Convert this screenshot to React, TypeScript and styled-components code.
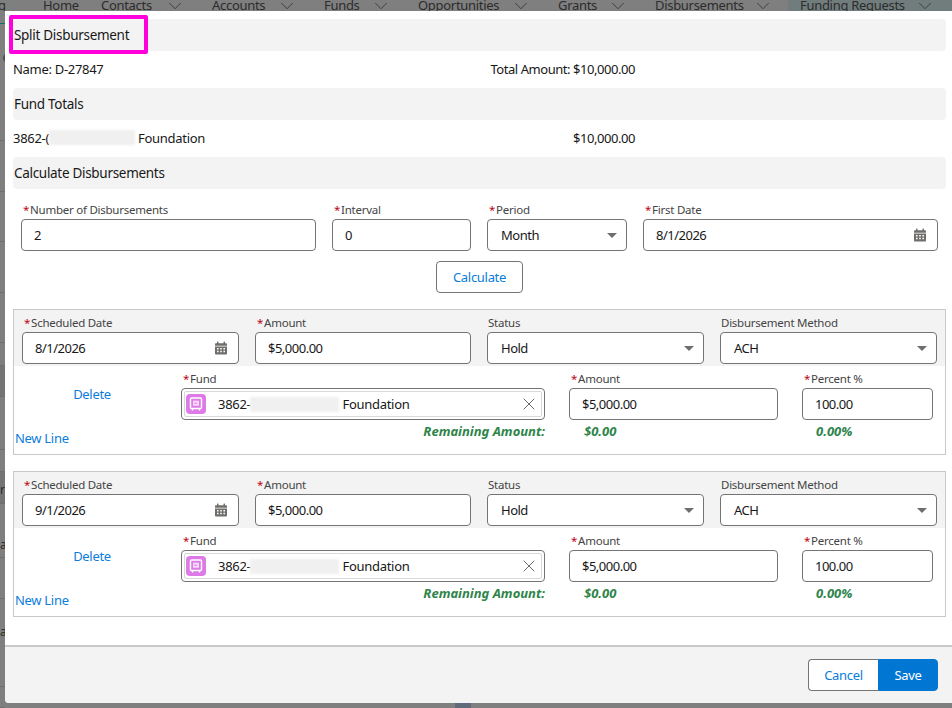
import React from 'react';
import styled, { createGlobalStyle } from 'styled-components';
import { ChevronDown, X } from 'lucide-react';

const GlobalStyle = createGlobalStyle`
  html, body {
    margin: 0;
    padding: 0;
    width: 952px;
    height: 708px;
    overflow: hidden;
    background: #7f7f7f;
    font-family: "Noto Sans", "Open Sans", Arial, sans-serif;
    font-size: 13px;
    letter-spacing: -0.3px;
    color: #181818;
  }
  * { box-sizing: border-box; }
`;

const Page = styled.div`
  display: grid;
  grid-template-columns: 5px 947px;
  grid-template-rows: 11px 692px 5px;
  width: 952px;
  height: 708px;
  background: #7f7f7f;
  overflow: hidden;
`;

const NavBar = styled.div`
  grid-column: 1 / 3;
  display: flex;
  align-items: flex-start;
  height: 11px;
  overflow: hidden;
  color: #2c2c2c;
  font-size: 13px;
  line-height: 11px;
  white-space: nowrap;
`;

const NavBrand = styled.div`
  flex: none;
  width: 43px;
  margin-left: -2px;
  margin-right: 2px;
`;

const NavItem = styled.div<{ $width: number }>`
  flex: none;
  display: flex;
  justify-content: space-between;
  width: ${(p) => p.$width}px;
  height: 11px;
  padding-right: 26px;
  svg { flex: none; margin-top: -5px; color: #3a3a3a; }
`;

const ActiveNav = styled(NavItem)`
  background: #717d7d;
  margin-left: -12px;
  padding-left: 12px;
  padding-right: 16px;
`;

const Rail = styled.div`
  grid-row: 2 / 4;
  display: flex;
  flex-direction: column;
  width: 5px;
  overflow: hidden;
`;

const RailRow = styled.div<{ $height: number; $line?: number; $dark?: boolean; $teal?: boolean }>`
  flex: none;
  height: ${(p) => p.$height}px;
  overflow: hidden;
  border-bottom: 1px solid ${(p) => (p.$teal ? '#0f6e62' : '#6f6f6f')};
  background: ${(p) => (p.$dark ? '#747474' : 'transparent')};
  color: #2c2c2c;
  font-size: 12px;
  line-height: ${(p) => p.$line ?? p.$height}px;
`;

const RailDot = styled.div`
  width: 10px;
  height: 10px;
  margin: 29px 0 0 3px;
  border-radius: 50%;
  background: #4f4f4f;
`;

const Modal = styled.div`
  display: flex;
  flex-direction: column;
  position: relative;
  height: 692px;
  background: #fff;
  border-bottom-left-radius: 4px;
`;

const Body = styled.div`
  flex: 1;
  padding: 8px 6px 0 8px;
`;

const SectionBar = styled.div`
  height: 32px;
  padding-left: 1px;
  border-radius: 4px;
  background: #f3f3f3;
  font-size: 13.5px;
  line-height: 32px;
`;

const Highlight = styled.div`
  position: absolute;
  left: 4px;
  top: 4px;
  width: 139px;
  height: 39px;
  border: 4px solid #ff00dc;
  border-radius: 2px;
`;

const InfoRow = styled.div`
  display: grid;
  grid-template-columns: 477px 145px;
  height: 37px;
  padding-bottom: 2px;
  align-items: center;
  white-space: nowrap;
`;

const AmountCell = styled.div`
  letter-spacing: -0.45px;
  text-align: right;
`;

const TextRun = styled.span`
  display: inline-flex;
  align-items: center;
`;

const Redact = styled.span<{ $width: number }>`
  display: inline-block;
  width: ${(p) => p.$width}px;
  height: 15px;
  background: #f0f0f0;
  filter: blur(1px);
`;

const CalcGrid = styled.div`
  display: grid;
  grid-template-columns: 295px 139px 140px 295px;
  gap: 16px;
  margin-top: 14px;
  padding-left: 8px;
`;

const Field = styled.div`
  min-width: 0;
`;

const Label = styled.div<{ $required?: boolean }>`
  height: 16px;
  padding-left: ${(p) => (p.$required ? 2 : 1)}px;
  color: #444;
  font-size: 11.5px;
  letter-spacing: -0.25px;
  line-height: 13px;
  white-space: nowrap;
`;

const Required = styled.span`
  margin-right: 1px;
  color: #ba0517;
`;

const Control = styled.div`
  display: flex;
  align-items: center;
  justify-content: space-between;
  height: 32px;
  padding: 0 11px 0 12px;
  border: 1px solid #747474;
  border-radius: 4px;
  background: #fff;
  letter-spacing: -0.5px;
  white-space: nowrap;
`;

const SelectControl = styled(Control)`
  padding-left: 13px;
  padding-right: 9px;
`;

const Arrow = styled.span`
  width: 0;
  height: 0;
  border-left: 5px solid transparent;
  border-right: 5px solid transparent;
  border-top: 5px solid #706e6b;
`;

const CalcAction = styled.div`
  display: flex;
  justify-content: center;
  margin: 10px 0 16px;
`;

const OutlineButton = styled.button`
  width: 87px;
  height: 32px;
  padding: 0;
  border: 1px solid #747474;
  border-radius: 4px;
  background: #fff;
  color: #0b7ddb;
  font: inherit;
  letter-spacing: inherit;
`;

const Card = styled.div`
  height: 146px;
  margin-bottom: 16px;
  border: 1px solid #c9c9c9;
`;

const CardHeader = styled.div`
  display: grid;
  grid-template-columns: 217px 216px 217px 217px;
  column-gap: 16px;
  height: 56px;
  padding: 6px 0 0 8px;
  background: #f3f3f3;
`;

const FundGrid = styled.div`
  display: grid;
  grid-template-columns: 143px 364px 209px 131px;
  grid-template-rows: 48px auto;
  column-gap: 24px;
  padding-top: 6px;
`;

const DeleteLink = styled.a`
  padding-top: 14px;
  margin-right: -13px;
  color: #0b7ddb;
  text-align: center;
  line-height: 16px;
`;

const NewLineLink = styled.a`
  margin: 10px 0 0 1px;
  color: #0b7ddb;
  line-height: 16px;
`;

const FundControl = styled.div`
  height: 32px;
  padding: 2px;
  border: 1px solid #747474;
  border-radius: 4px;
  background: #fff;
`;

const FundPill = styled.div`
  display: flex;
  align-items: center;
  height: 26px;
  padding: 0 2px 0 1px;
  border: 1px solid #d8d8d8;
  border-radius: 2px;
  white-space: nowrap;
`;

const FundIcon = styled.span`
  display: flex;
  align-items: center;
  justify-content: center;
  flex: none;
  width: 20px;
  height: 20px;
  margin-right: 12px;
  border-radius: 4px;
  background: #dd7ae8;
`;

const ClearIcon = styled(X)`
  flex: none;
  margin-left: auto;
  color: #5c5c5c;
`;

const Total = styled.div<{ $indent?: number }>`
  height: 20px;
  margin-top: 1px;
  padding-left: ${(p) => p.$indent ?? 0}px;
  color: #2e844a;
  font-weight: 700;
  font-style: italic;
  font-size: 13px;
  letter-spacing: 0;
  line-height: 20px;
`;

const RemainingLabel = styled(Total)`
  text-align: right;
  white-space: nowrap;
`;

const Footer = styled.div`
  flex: none;
  display: flex;
  justify-content: flex-end;
  height: 58px;
  padding: 12px 14px 0 0;
  border-top: 2px solid #c9c9c9;
  border-bottom-left-radius: 4px;
  background: #f3f3f3;
`;

const FooterButton = styled.button<{ $primary?: boolean }>`
  height: 32px;
  width: ${(p) => (p.$primary ? 60 : 70)}px;
  padding: 0;
  border: 1px solid ${(p) => (p.$primary ? '#0176d3' : '#747474')};
  border-right-width: ${(p) => (p.$primary ? 1 : 0)}px;
  border-radius: ${(p) => (p.$primary ? '0 4px 4px 0' : '4px 0 0 4px')};
  background: ${(p) => (p.$primary ? '#0176d3' : '#fff')};
  color: ${(p) => (p.$primary ? '#fff' : '#0b7ddb')};
  font: inherit;
  letter-spacing: inherit;
`;

const BottomStrip = styled.div`
  display: flex;
  height: 5px;
`;

const BottomTab = styled.div`
  width: 16px;
  height: 5px;
  margin-left: 450px;
  background: #5f6b7a;
`;

const CalendarIcon = () => (
  <svg width="12" height="14" viewBox="1 0 12 14" fill="#706e6b">
    <rect x="3" y="0.5" width="1.5" height="2.5" rx="0.5" />
    <rect x="9.5" y="0.5" width="1.5" height="2.5" rx="0.5" />
    <path d="M1 3.2c0-.6.5-1 1-1h10c.5 0 1 .4 1 1v1.6H1z" />
    <path
      fillRule="evenodd"
      d="M1 5.6h12v6.9c0 .5-.5 1-1 1H2c-.5 0-1-.5-1-1zM3 7v1.4h1.6V7zm3.2 0v1.4h1.6V7zm3.2 0v1.4H11V7zM3 9.8v1.5h1.6V9.8zm3.2 0v1.5h1.6V9.8zm3.2 0v1.5H11V9.8z"
    />
  </svg>
);

const SafeIcon = () => (
  <svg width="14" height="14" viewBox="0 0 14 14" fill="none" stroke="#fff" strokeWidth="1.4">
    <rect x="1.5" y="1" width="11" height="10.5" rx="1" />
    <rect x="4" y="3.7" width="6" height="5" fill="#f6dcf9" stroke="none" />
    <path d="M5.2 6.2h3" stroke="#dd7ae8" strokeWidth="1" />
    <path d="M3.5 11.5v2M10.5 11.5v2" />
  </svg>
);

const LabelText = ({ text, required }: { text: string; required?: boolean }) => (
  <Label $required={required}>
    {required && <Required>*</Required>}
    {text}
  </Label>
);

const TextField = ({ label, value, required = true }: { label: string; value: string; required?: boolean }) => (
  <Field>
    <LabelText text={label} required={required} />
    <Control>{value}</Control>
  </Field>
);

const DateField = ({ label, value }: { label: string; value: string }) => (
  <Field>
    <LabelText text={label} required />
    <Control>
      {value}
      <CalendarIcon />
    </Control>
  </Field>
);

const SelectField = ({ label, value, required }: { label: string; value: string; required?: boolean }) => (
  <Field>
    <LabelText text={label} required={required} />
    <SelectControl>
      {value}
      <Arrow />
    </SelectControl>
  </Field>
);

const navItems = [
  { label: 'Home', width: 58 },
  { label: 'Contacts', width: 111 },
  { label: 'Accounts', width: 112 },
  { label: 'Funds', width: 94 },
  { label: 'Opportunities', width: 140 },
  { label: 'Grants', width: 97 },
  { label: 'Disbursements', width: 145 },
];

const railRows: { height: number; line?: number; dark?: boolean; teal?: boolean; text?: string; dot?: boolean }[] = [
  { height: 13, teal: true },
  { height: 117, dot: true },
  { height: 51 },
  { height: 50 },
  { height: 51 },
  { height: 50 },
  { height: 23 },
  { height: 31, dark: true },
  { height: 53 },
  { height: 22 },
  { height: 32, line: 36, dark: true, text: 'r' },
  { height: 54, line: 82, text: 'al' },
  { height: 41 },
  { height: 88, line: 66, text: 'al' },
  { height: 21 },
];

const disbursements = [
  { date: '8/1/2026', redactWidth: 89 },
  { date: '9/1/2026', redactWidth: 89 },
];

const App = () => {
  return (
    <>
      <GlobalStyle />
      <Page>
        <NavBar>
          <NavBrand>g</NavBrand>
          {navItems.map((item) => (
            <NavItem key={item.label} $width={item.width}>
              {item.label}
              {item.label !== 'Home' && <ChevronDown size={22} strokeWidth={1} />}
            </NavItem>
          ))}
          <ActiveNav $width={164}>
            Funding Requests
            <ChevronDown size={22} strokeWidth={1} />
          </ActiveNav>
        </NavBar>
        <Rail>
          {railRows.map((row, i) => (
            <RailRow key={i} $height={row.height} $line={row.line} $dark={row.dark} $teal={row.teal}>
              {row.dot && <RailDot />}
              {row.text}
            </RailRow>
          ))}
        </Rail>
        <Modal>
          <Body>
            <SectionBar>Split Disbursement</SectionBar>
            <Highlight />
            <InfoRow>
              <div>Name: D-27847</div>
              <AmountCell>Total Amount: $10,000.00</AmountCell>
            </InfoRow>
            <SectionBar>Fund Totals</SectionBar>
            <InfoRow>
              <TextRun>
                3862-(
                <Redact $width={86} />
                &nbsp;Foundation
              </TextRun>
              <AmountCell>$10,000.00</AmountCell>
            </InfoRow>
            <SectionBar>Calculate Disbursements</SectionBar>
            <CalcGrid>
              <TextField label="Number of Disbursements" value="2" />
              <TextField label="Interval" value="0" />
              <SelectField label="Period" value="Month" required />
              <DateField label="First Date" value="8/1/2026" />
            </CalcGrid>
            <CalcAction>
              <OutlineButton>Calculate</OutlineButton>
            </CalcAction>
            {disbursements.map((d) => (
              <Card key={d.date}>
                <CardHeader>
                  <DateField label="Scheduled Date" value={d.date} />
                  <TextField label="Amount" value="$5,000.00" />
                  <SelectField label="Status" value="Hold" />
                  <SelectField label="Disbursement Method" value="ACH" />
                </CardHeader>
                <FundGrid>
                  <DeleteLink>Delete</DeleteLink>
                  <Field>
                    <LabelText text="Fund" required />
                    <FundControl>
                      <FundPill>
                        <FundIcon>
                          <SafeIcon />
                        </FundIcon>
                        <TextRun>
                          3862-
                          <Redact $width={d.redactWidth} />
                          &nbsp;Foundation
                        </TextRun>
                        <ClearIcon size={20} strokeWidth={1.1} />
                      </FundPill>
                    </FundControl>
                  </Field>
                  <TextField label="Amount" value="$5,000.00" />
                  <TextField label="Percent %" value="100.00" />
                  <NewLineLink>New Line</NewLineLink>
                  <RemainingLabel>Remaining Amount:</RemainingLabel>
                  <Total $indent={15}>$0.00</Total>
                  <Total $indent={14}>0.00%</Total>
                </FundGrid>
              </Card>
            ))}
          </Body>
          <Footer>
            <FooterButton>Cancel</FooterButton>
            <FooterButton $primary>Save</FooterButton>
          </Footer>
        </Modal>
        <BottomStrip>
          <BottomTab />
        </BottomStrip>
      </Page>
    </>
  );
};

export default App;
